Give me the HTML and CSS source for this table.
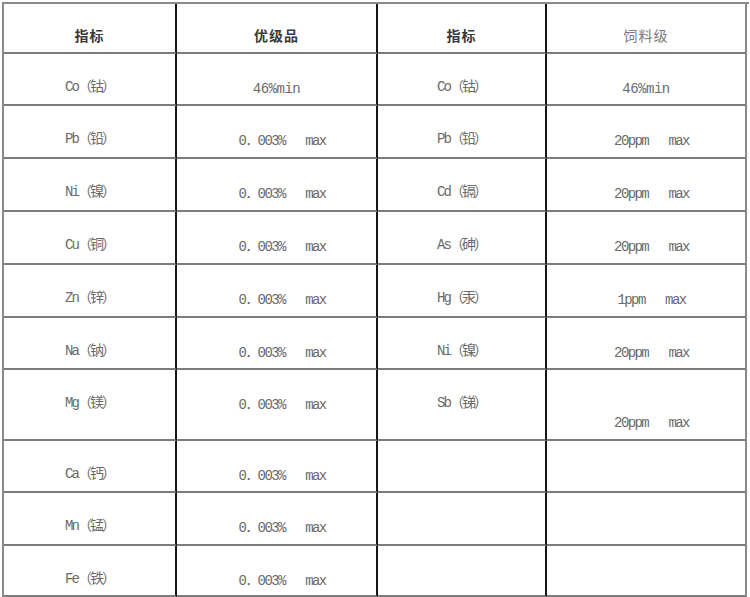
FILE: index.html
```html
<!DOCTYPE html>
<html lang="zh-CN">
<head>
<meta charset="utf-8">
<title>钴指标</title>
<link rel="stylesheet" href="styles.css">
</head>
<body>
<div class="spec">
  <div class="cell head">指标</div>
  <div class="cell head">优级品</div>
  <div class="cell head">指标</div>
  <div class="cell head light">饲料级</div>

  <div class="cell name">Co（钴）</div>
  <div class="cell val">46%min</div>
  <div class="cell name">Co（钴）</div>
  <div class="cell val">46%min</div>

  <div class="cell name">Pb（铅）</div>
  <div class="cell val mx">0．003%   max</div>
  <div class="cell name">Pb（铅）</div>
  <div class="cell val mx">20ppm   max</div>

  <div class="cell name">Ni（镍）</div>
  <div class="cell val mx">0．003%   max</div>
  <div class="cell name">Cd（镉）</div>
  <div class="cell val mx">20ppm   max</div>

  <div class="cell name">Cu（铜）</div>
  <div class="cell val mx">0．003%   max</div>
  <div class="cell name">As（砷）</div>
  <div class="cell val mx">20ppm   max</div>

  <div class="cell name">Zn（锌）</div>
  <div class="cell val mx">0．003%   max</div>
  <div class="cell name">Hg（汞）</div>
  <div class="cell val mx">1ppm   max</div>

  <div class="cell name">Na（钠）</div>
  <div class="cell val mx">0．003%   max</div>
  <div class="cell name">Ni（镍）</div>
  <div class="cell val mx">20ppm   max</div>

  <div class="cell name">Mg（镁）</div>
  <div class="cell val mx">0．003%   max</div>
  <div class="cell name">Sb（锑）</div>
  <div class="cell val mx bottom">20ppm   max</div>

  <div class="cell name">Ca（钙）</div>
  <div class="cell val mx">0．003%   max</div>
  <div class="cell name"></div>
  <div class="cell val"></div>

  <div class="cell name">Mn（锰）</div>
  <div class="cell val mx">0．003%   max</div>
  <div class="cell name"></div>
  <div class="cell val"></div>

  <div class="cell name">Fe（铁）</div>
  <div class="cell val mx">0．003%   max</div>
  <div class="cell name"></div>
  <div class="cell val"></div>
</div>
</body>
</html>
```
FILE: styles.css
```css
html, body {
  margin: 0;
  padding: 0;
  background: #ffffff;
}

body {
  padding: 2px 0 0 2px;
  font-family: "Liberation Mono", "Noto Sans CJK SC", monospace;
  color: #6a6a6a;
}

.spec {
  display: grid;
  width: 747px;
  box-sizing: border-box;
  grid-template-columns: 173px 201px 169px 200px;
  grid-template-rows: 50px 52px 53px 53px 53px 53px 52px 71px 52px 53px 51px;
  border-top: 2px solid #8a8a8a;
  border-left: 2px solid #8a8a8a;
}

.cell {
  box-sizing: border-box;
  display: flex;
  justify-content: center;
  align-items: flex-start;
  border-bottom: 2px solid #7c7c7c;
  border-right: 2px solid #161616;
  line-height: 20px;
  white-space: pre;
}

.cell:nth-child(4n) {
  border-right-color: #8a8a8a;
}

.head {
  padding-top: 21px;
  font-family: "Noto Sans CJK SC", sans-serif;
  font-size: 14px;
  font-weight: 700;
  letter-spacing: 1px;
  color: #3a3a3a;
}

.head.light {
  font-weight: 400;
  color: #7a7a7a;
}

.name {
  padding-top: 23px;
  font-size: 14px;
  letter-spacing: -2px;
}

.val {
  padding-top: 25px;
  font-size: 14px;
  letter-spacing: -0.5px;
}

.val.mx {
  letter-spacing: -1.6px;
  padding-left: 11px;
}

.val.bottom {
  align-items: flex-end;
  padding-top: 0;
  padding-bottom: 6px;
}
```
